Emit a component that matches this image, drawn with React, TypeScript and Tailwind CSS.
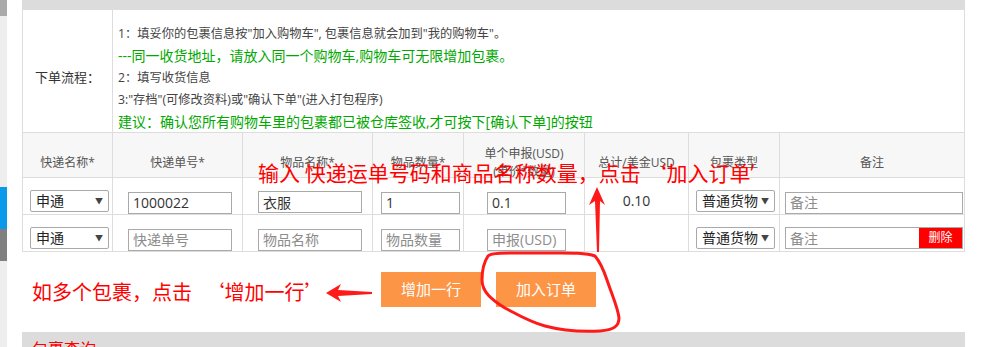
import React from "react";

const FONT = "font-['Open_Sans','Noto_Sans_CJK_SC',sans-serif]";
const CJK = "font-['Noto_Sans_CJK_SC',sans-serif]";

function FakeSelect({ label, className }: { label: string; className: string }) {
  return (
    <div
      className={`flex h-[22px] items-center justify-between rounded-[2px] border border-[#a9a9a9] bg-white pl-[5px] pr-[5px] text-[14px] leading-none text-[#222] ${className}`}
    >
      <span>{label}</span>
      <span className="text-[8px] text-[#444]">▼</span>
    </div>
  );
}

function Field({
  value,
  placeholder,
  className,
}: {
  value?: string;
  placeholder: string;
  className: string;
}) {
  return (
    <input
      readOnly
      defaultValue={value}
      placeholder={placeholder}
      className={`h-[22px] border border-[#a9a9a9] bg-white px-[4px] text-[14px] text-[#333] outline-none placeholder:text-[#8c8c8c] ${className}`}
    />
  );
}

const headers = ["快递名称*", "快递单号*", "物品名称*", "物品数量*", "", "总计/美金USD", "包裹类型", "备注"];

function OrderRow({ filled }: { filled: boolean }) {
  return (
    <>
      <div className="bg-white pt-[12px]">
        <FakeSelect label="申通" className="ml-[7px] w-[79px]" />
      </div>
      <div className="bg-white pt-[12px]">
        <Field value={filled ? "1000022" : undefined} placeholder="快递单号" className="ml-[15px] w-[104px]" />
      </div>
      <div className="bg-white pt-[12px]">
        <Field value={filled ? "衣服" : undefined} placeholder="物品名称" className="ml-[15px] w-[104px]" />
      </div>
      <div className="bg-white pt-[12px]">
        <Field value={filled ? "1" : undefined} placeholder="物品数量" className="ml-[8px] w-[79px]" />
      </div>
      <div className="bg-white pt-[12px]">
        <Field value={filled ? "0.1" : undefined} placeholder="申报(USD)" className="ml-[23px] w-[79px]" />
      </div>
      <div className="bg-white pt-[12px] text-center text-[14px] leading-[22px] text-[#333]">
        {filled ? "0.10" : ""}
      </div>
      <div className="bg-white pt-[12px]">
        <FakeSelect label="普通货物" className="ml-[7px] w-[79px]" />
      </div>
      <div className="bg-white pt-[12px]">
        {filled ? (
          <Field placeholder="备注" className="ml-[5px] w-[178px]" />
        ) : (
          <div className="ml-[5px] flex h-[22px] w-[178px] border border-[#a9a9a9] bg-white">
            <input
              readOnly
              placeholder="备注"
              className="min-w-0 flex-1 px-[4px] text-[14px] text-[#333] outline-none placeholder:text-[#8c8c8c]"
            />
            <button className="w-[43px] bg-[#ff0000] text-[12px] text-white">删除</button>
          </div>
        )}
      </div>
    </>
  );
}

export default function App() {
  return (
    <div className={`relative flex h-[347px] w-[993px] overflow-hidden bg-white ${FONT}`}>
      {/* left scroll strip */}
      <div className="flex w-[7px] flex-col bg-[#eeeeee]">
        <div className="h-[16px] bg-[#aaaaaa]" />
        <div className="h-[171px]" />
        <div className="h-[42px] bg-[#0a9aea]" />
        <div className="h-[32px] bg-[#808080]" />
      </div>
      <div className="w-[15px]" />

      <div className="flex w-[943px] flex-col">
        <div className="h-[9px] bg-[#dcdcdc]" />

        <div className="grid grid-cols-[89px_129px_129px_90px_120px_103px_90px_184px] grid-rows-[122px_44px_36px_36px] gap-px border border-[#dddddd] bg-[#dddddd]">
          <div className="flex items-center justify-center bg-white pt-[14px] text-[13px] text-[#333]">
            下单流程：
          </div>
          <div className="col-span-7 bg-white pl-[5px] pt-[12px] text-[12.25px] text-[#444]">
            <div className="h-[23px] leading-[23px]">
              1：填妥你的包裹信息按"加入购物车", 包裹信息就会加到"我的购物车"。
            </div>
            <div className="h-[22px] text-[14px] leading-[22px] text-[#00a800]">
              ---同一收货地址，请放入同一个购物车,购物车可无限增加包裹。
            </div>
            <div className="h-[22px] leading-[22px]">2：填写收货信息</div>
            <div className="h-[22px] leading-[22px]">3:"存档"(可修改资料)或"确认下单"(进入打包程序)</div>
            <div className="h-[21px] text-[14px] leading-[21px] text-[#00a800]">
              建议：确认您所有购物车里的包裹都已被仓库签收,才可按下[确认下单]的按钮
            </div>
          </div>

          {headers.map((h, i) => (
            <div
              key={i}
              className="flex items-center justify-center bg-[#f7f7f7] pt-[16px] text-center text-[12px] leading-[16px] text-[#555]"
            >
              {i === 4 ? (
                <div className="leading-[18px]">
                  单个申报(USD)
                  <br />
                  (单价*数量)
                </div>
              ) : (
                h
              )}
            </div>
          ))}

          <OrderRow filled />
          <OrderRow filled={false} />
        </div>

        <div className="flex h-[80px] gap-[15px] pl-[359px] pt-[20px]">
          <button className="h-[35px] w-[100px] bg-[#fc9545] text-[15px] text-white">增加一行</button>
          <button className="h-[35px] w-[100px] bg-[#fc9545] text-[15px] text-white">加入订单</button>
        </div>

        <div className="h-[15px] bg-[#dcdcdc] pl-[10px] pt-[7px] text-[16px] leading-[20px] text-[#ff0000]">
          包裹查询
        </div>
      </div>

      {/* hand-drawn annotations */}
      <div className={`pointer-events-none absolute inset-0 ${CJK}`}>
        <div className="absolute left-[258px] top-[161px] whitespace-nowrap text-[21px] leading-[22px] text-[#ff0000]">
          输入 快递运单号码和商品名称数量，点击 ‘加入订单<span className="font-['Open_Sans',sans-serif]">’</span>
        </div>
        <div className="absolute left-[32px] top-[281px] whitespace-nowrap text-[20px] leading-[22px] text-[#ff0000]">
          如多个包裹，点击 <span className="ml-[8px]">‘增加一行’</span>
        </div>
        <svg className="absolute left-0 top-0" width="993" height="347" viewBox="0 0 993 347">
          <polygon points="326,293 341,284 338,290 372,292 372,294 338,296 341,302" fill="#ff1a1a" />
          <polygon points="597,187 605,205 600,201 599,252 597,252 595,201 589,205" fill="#ff1a1a" />
          <path
            d="M488,256 C492,252 510,253 540,253 C565,253 585,252 595,256 C600,262 603,268 607,280 C612,295 618,308 619,318 C619,326 614,330 600,331 C580,332 560,330 545,326 C530,322 520,316 505,308 C492,300 482,292 482,280 C482,270 484,262 488,256 Z"
            fill="none"
            stroke="#ff1a1a"
            strokeWidth="3"
            strokeLinejoin="round"
          />
        </svg>
      </div>
    </div>
  );
}
